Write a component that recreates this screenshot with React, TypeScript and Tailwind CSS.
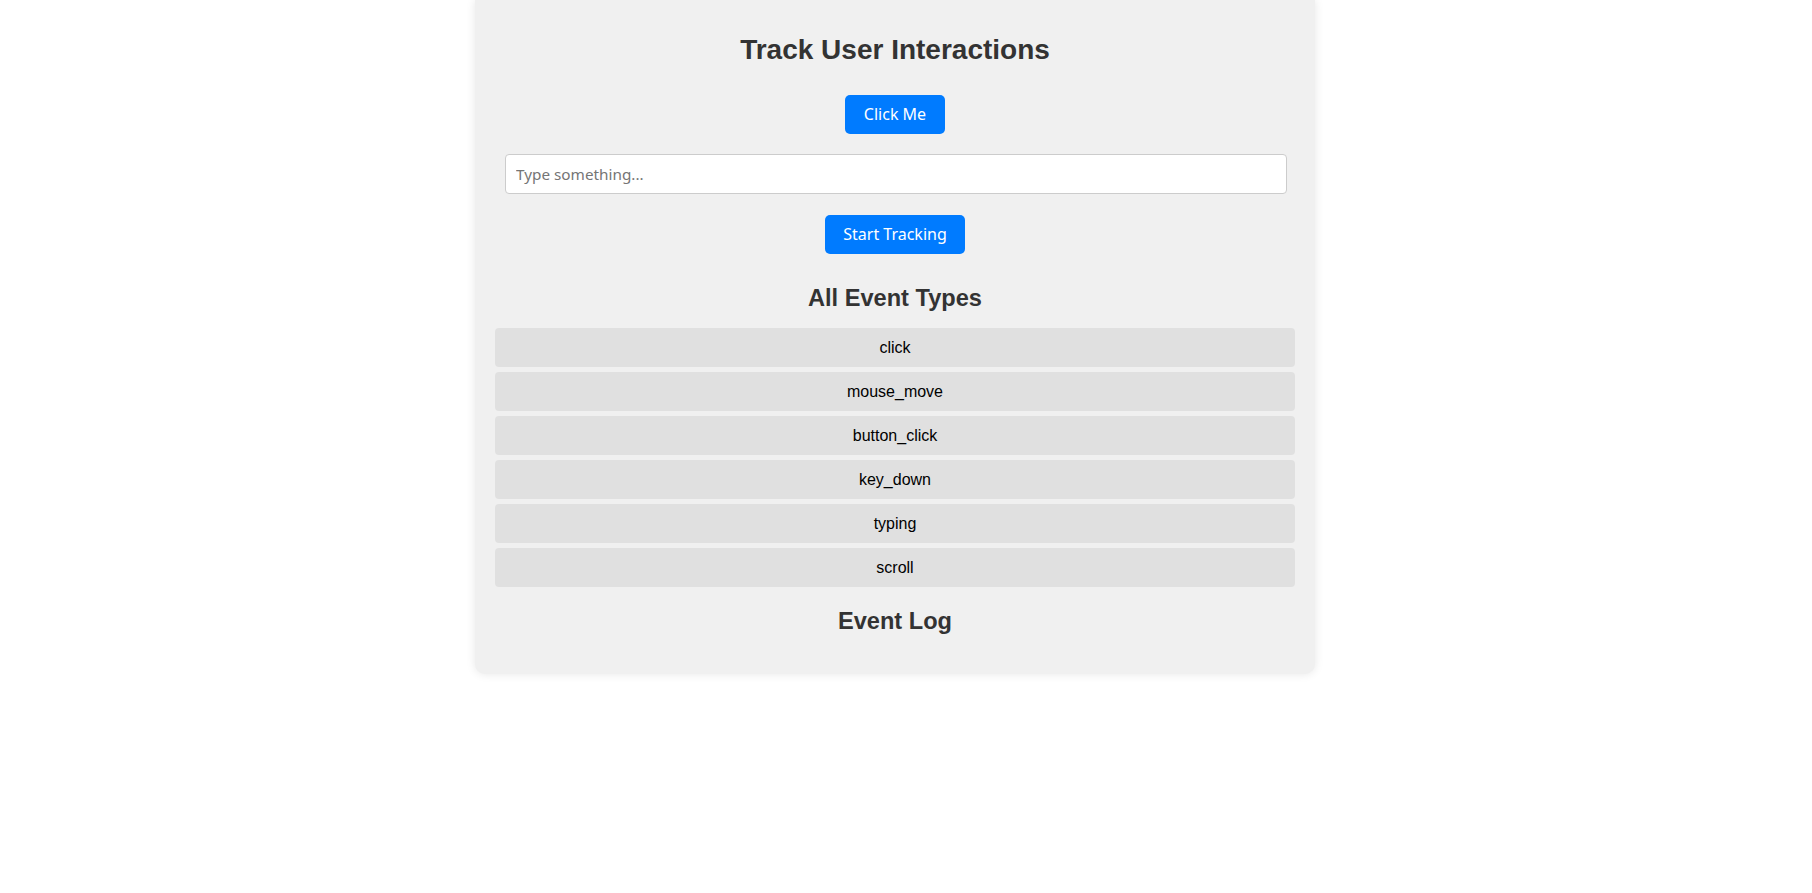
const eventTypes = ["click", "mouse_move", "button_click", "key_down", "typing", "scroll"];

export default function App() {
  return (
    <div className="min-h-screen bg-white pr-[22px] font-['Liberation_Sans',Arial,sans-serif]">
      <div className="mx-auto w-[840px] rounded-b-[10px] bg-[#f0f0f0] px-5 pt-5 pb-[39px] shadow-[0_0_10px_rgba(0,0,0,0.1)]">
        {/* Header */}
        <h1 className="mt-[14px] text-center text-[28px] leading-[32px] font-bold text-[#333]">
          Track User Interactions
        </h1>

        <div className="mt-[29px] flex justify-center">
          <button className="h-[39px] w-[100px] rounded-[5px] bg-[#007bff] pb-px text-[16px] text-white font-['Noto_Sans',sans-serif]">
            Click Me
          </button>
        </div>

        <input
          type="text"
          placeholder="Type something..."
          className="mt-[20px] ml-[10px] block h-[40px] w-[782px] rounded-[4px] border border-[#ccc] bg-white px-[10px] text-[15.3px] text-[#333] placeholder:text-[#757575] font-['Noto_Sans',sans-serif] outline-none"
        />

        <div className="mt-[21px] flex justify-center">
          <button className="h-[39px] w-[140px] rounded-[5px] bg-[#007bff] pb-px text-[16px] text-white font-['Noto_Sans',sans-serif]">
            Start Tracking
          </button>
        </div>

        {/* Event types */}
        <h2 className="mt-[31px] text-center text-[23.6px] leading-[27px] font-bold text-[#333]">
          All Event Types
        </h2>
        <ul className="mt-[16px] flex flex-col gap-[5px]">
          {eventTypes.map((t) => (
            <li
              key={t}
              className="flex h-[39px] items-center justify-center rounded-[4px] bg-[#e0e0e0] text-[16px] text-black"
            >
              {t}
            </li>
          ))}
        </ul>

        {/* Log */}
        <h2 className="mt-[21px] text-center text-[23.6px] leading-[27px] font-bold text-[#333]">
          Event Log
        </h2>
      </div>
    </div>
  );
}
